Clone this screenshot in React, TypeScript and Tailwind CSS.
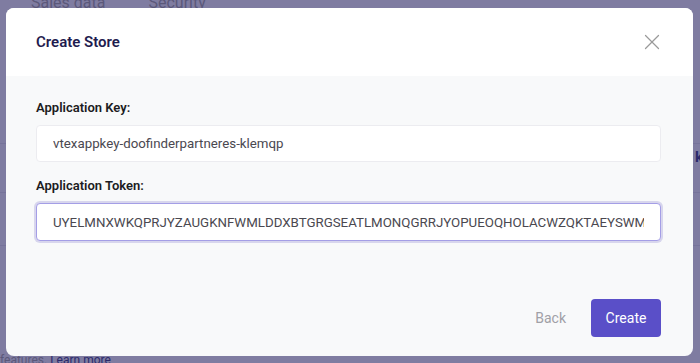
import { X } from "lucide-react";

const font = { fontFamily: "Roboto, 'Liberation Sans', sans-serif" };

function Field({ label, value, focused }: { label: string; value: string; focused?: boolean }) {
  return (
    <div className="flex flex-col gap-[7px]">
      <label className="text-[13px] leading-5 font-semibold text-[#1c1c22]">{label}</label>
      <input
        readOnly
        defaultValue={value}
        className={
          focused
            ? "h-[38px] w-full rounded-[4px] border border-[#a49ee6] bg-white px-4 text-[13.3px] text-[#4a4850] outline-none shadow-[0_0_0_2px_rgba(120,110,200,0.25)]"
            : "h-[37px] w-full rounded-[4px] border border-[#ececf0] bg-white px-4 text-[13.3px] text-[#4a4850] outline-none"
        }
      />
    </div>
  );
}

export default function App() {
  return (
    <div className="relative h-[363px] w-[700px] overflow-hidden bg-[#7f7ca1]" style={font}>
      {/* page behind the overlay */}
      <div className="flex gap-[43px] pl-[31px] -mt-[9px] text-[16px] text-[#5b587a]">
        <span>Sales data</span>
        <span>Security</span>
      </div>
      <div className="mt-[128px] border-t border-[#76739a]" />
      <div className="mt-[48px] border-t border-[#76739a]" />
      <div className="mt-[52px] border-t border-[#76739a]" />
      <div className="absolute bottom-[-6px] left-[0px] text-[12px] text-[#5b587a]">
        features. <span className="text-[#2c2a6b]">Learn more</span>
      </div>
      <div className="absolute right-[-3px] top-[146px] text-[15px] font-bold text-[#2c2a6b]">k</div>

      {/* modal */}
      <div className="absolute left-[6px] top-[8px] flex h-[348px] w-[687px] flex-col overflow-hidden rounded-[8px] bg-[#f8f9fa]">
        <div className="flex h-[68px] items-center justify-between bg-white pl-[30px] pr-[28px]">
          <h2 className="text-[15px] font-semibold text-[#1f1c4f]">Create Store</h2>
          <X className="h-[26px] w-[26px] text-[#9a9a9a]" strokeWidth={1.15} />
        </div>
        <div className="flex flex-1 flex-col px-[30px] pt-[22px] pb-[19px]">
          <div className="flex w-[625px] flex-col gap-[14px]">
            <Field label="Application Key:" value="vtexappkey-doofinderpartneres-klemqp" />
            <Field
              label="Application Token:"
              value="UYELMNXWKQPRJYZAUGKNFWMLDDXBTGRGSEATLMONQGRRJYOPUEOQHOLACWZQKTAEYSWMXQZ"
              focused
            />
          </div>
          <div className="mt-auto flex w-[625px] items-center justify-end gap-[25px]">
            <button className="text-[14px] text-[#a0a0a6]">Back</button>
            <button className="h-[38px] w-[70px] rounded-[4px] bg-[#5a4fc8] text-[14px] text-white">Create</button>
          </div>
        </div>
      </div>
    </div>
  );
}
